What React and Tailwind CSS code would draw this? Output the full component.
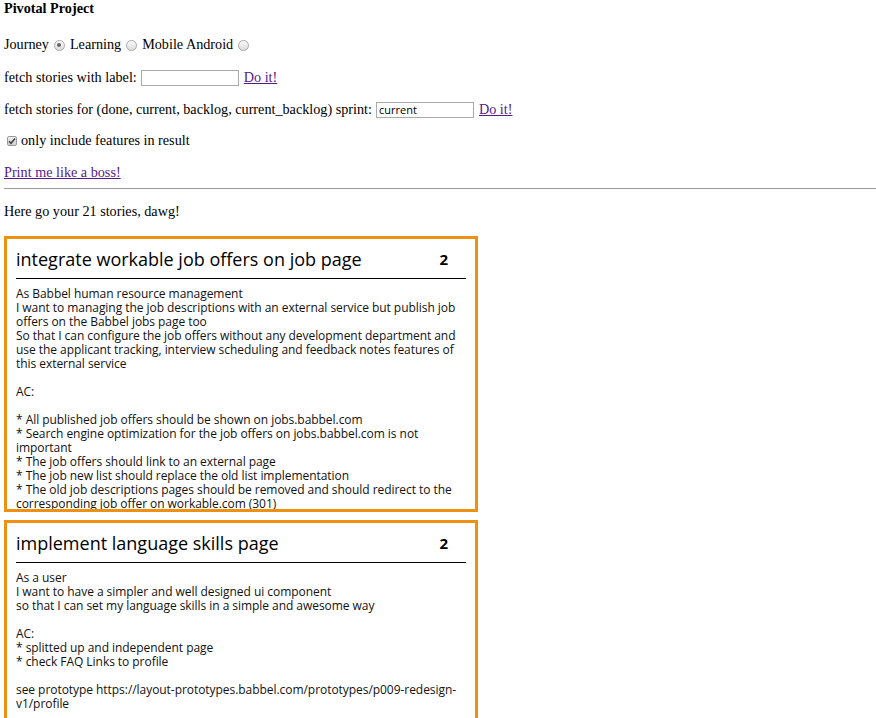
import React from "react";

const stories = [
  {
    title: "integrate workable job offers on job page",
    points: 2,
    body: `As Babbel human resource management
I want to managing the job descriptions with an external service but publish job offers on the Babbel jobs page too
So that I can configure the job offers without any development department and use the applicant tracking, interview scheduling and feedback notes features of this external service

AC:

* All published job offers should be shown on jobs.babbel.com
* Search engine optimization for the job offers on jobs.babbel.com is not important
* The job offers should link to an external page
* The job new list should replace the old list implementation
* The old job descriptions pages should be removed and should redirect to the corresponding job offer on workable.com (301)
* Job offers are shown in English only`,
  },
  {
    title: "implement language skills page",
    points: 2,
    body: `As a user
I want to have a simpler and well designed ui component
so that I can set my language skills in a simple and awesome way

AC:
* splitted up and independent page
* check FAQ Links to profile

see prototype https://layout-prototypes.babbel.com/prototypes/p009-redesign-v1/profile`,
  },
];

function Radio({ checked }) {
  return (
    <span className="inline-block w-[11px] h-[11px] rounded-full border border-[#a8a8a8] bg-gradient-to-b from-[#fbfbfb] to-[#dcdcdc] relative mx-[5px] align-middle">
      {checked && (
        <span className="absolute left-[2.5px] top-[2.5px] w-[4px] h-[4px] rounded-full bg-[#666]" />
      )}
    </span>
  );
}

function StoryCard({ story }) {
  return (
    <div className="border-[3px] border-[#ef9110] h-[276px] overflow-hidden px-[9px] pt-[8px] mb-[8px] w-[474px]">
      <div className="flex items-center h-[24px] border-b border-black pb-[7px] box-content">
        <span className="flex-1 text-[18px] text-black font-['Open_Sans',sans-serif]">
          {story.title}
        </span>
        <span className="text-[15px] font-bold font-['Open_Sans',sans-serif] pr-[18px]">{story.points}</span>
      </div>
      <div className="mt-[8px] text-[12px] leading-[14px] text-[#111] whitespace-pre-wrap font-['Open_Sans',sans-serif] tracking-[-0.05px]">
        {story.body}
      </div>
    </div>
  );
}

export default function App() {
  return (
    <div className="bg-white min-h-screen px-[4px] pt-[1px] text-[14.2px] text-black font-['Liberation_Serif',serif]">
      <div className="h-[16px] flex items-center font-bold">Pivotal Project</div>

      <div className="h-[16px] mt-[20px] flex items-center">
        Journey <Radio checked /> Learning <Radio /> Mobile Android <Radio />
      </div>

      <div className="h-[16px] mt-[17px] flex items-center">
        fetch stories with label:
        <input className="ml-[4px] w-[98px] h-[16px] border border-[#aaa] outline-none" />
        <a href="#" className="ml-[5px] text-[#551a8b] underline">Do it!</a>
      </div>

      <div className="h-[16px] mt-[16px] flex items-center">
        fetch stories for (done, current, backlog, current_backlog) sprint:
        <input
          defaultValue="current"
          className="ml-[4px] w-[98px] h-[16px] border border-[#aaa] outline-none px-[2px] text-[11px] font-['Open_Sans',sans-serif]"
        />
        <a href="#" className="ml-[5px] text-[#551a8b] underline">Do it!</a>
      </div>

      <div className="h-[16px] mt-[15px] flex items-center">
        <span className="inline-flex items-center justify-center w-[10px] h-[10px] ml-[3px] mr-[4px] rounded-[2px] border border-[#9a9a9a] bg-gradient-to-b from-[#f0f0f0] to-[#cfcfcf]">
          <svg width="8" height="8" viewBox="0 0 8 8">
            <path d="M1 4.2 L3 6.2 L7 1.5" stroke="#444" strokeWidth="1.6" fill="none" />
          </svg>
        </span>
        only include features in result
      </div>

      <div className="h-[16px] mt-[16px] flex items-center">
        <a href="#" className="text-[#551a8b] underline">Print me like a boss!</a>
      </div>

      <hr className="mt-[7px] -mr-[4px] border-0 border-t border-[#9b9b9b]" />

      <div className="h-[16px] mt-[15px] flex items-center">Here go your 21 stories, dawg!</div>

      <div className="mt-[16px]">
        {stories.map((s) => (
          <StoryCard key={s.title} story={s} />
        ))}
      </div>
    </div>
  );
}
